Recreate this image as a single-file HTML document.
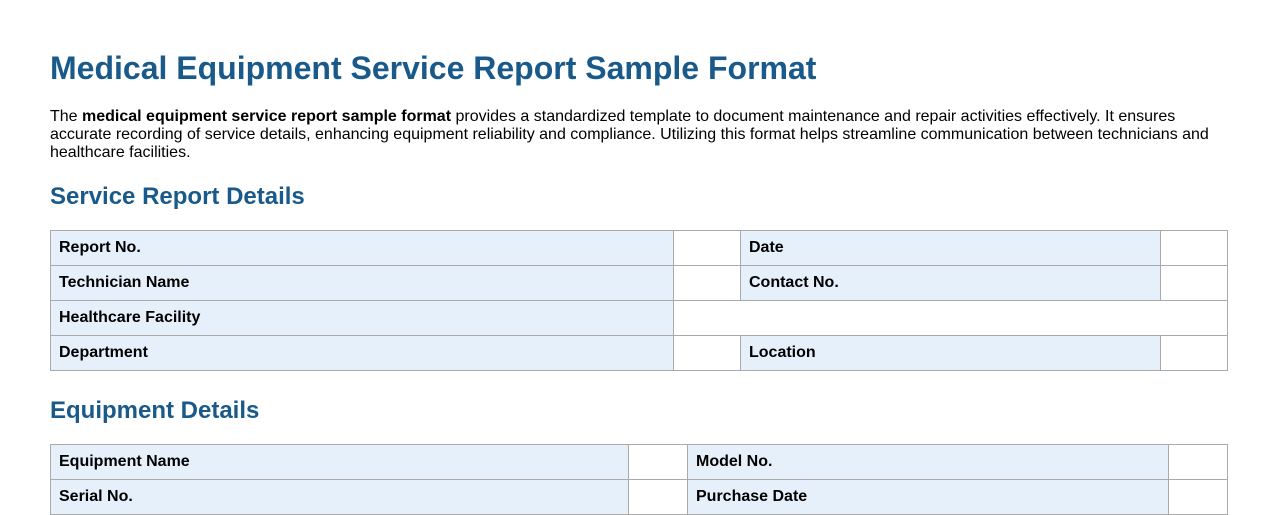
<!DOCTYPE html>
<html><head><meta charset="utf-8"><style>
html,body{margin:0;padding:0;background:#fff;width:1278px;height:501px;overflow:hidden}
body{font-family:"Liberation Sans",Arial,sans-serif;color:#000}
h1{position:absolute;left:50px;top:48px;margin:0;font-size:32px;line-height:40px;color:#1a5a8a;font-weight:bold;white-space:nowrap}
p{position:absolute;left:50px;top:108px;width:1180px;margin:0;font-size:16px;line-height:18px}
h2{position:absolute;left:50px;margin:0;font-size:24px;line-height:30px;color:#1a5a8a;font-weight:bold}
table{position:absolute;left:50px;width:1177px;border-collapse:collapse;table-layout:fixed}
td{border:1px solid #aaa;height:35px;padding:0 8px;font-size:16px;font-weight:bold;box-sizing:border-box}
td.l{background:#e6f0fa}
</style></head><body>
<h1>Medical Equipment Service Report Sample Format</h1>
<p>The <b>medical equipment service report sample format</b> provides a standardized template to document maintenance and repair activities effectively. It ensures accurate recording of service details, enhancing equipment reliability and compliance. Utilizing this format helps streamline communication between technicians and healthcare facilities.</p>
<h2 style="top:182px">Service Report Details</h2>
<table style="top:230px">
<colgroup><col style="width:623px"><col style="width:67px"><col style="width:420px"><col style="width:67px"></colgroup>
<tr><td class="l">Report No.</td><td></td><td class="l">Date</td><td></td></tr>
<tr><td class="l">Technician Name</td><td></td><td class="l">Contact No.</td><td></td></tr>
<tr><td class="l">Healthcare Facility</td><td colspan="3"></td></tr>
<tr><td class="l">Department</td><td></td><td class="l">Location</td><td></td></tr>
</table>
<h2 style="top:396px">Equipment Details</h2>
<table style="top:444px">
<colgroup><col style="width:578px"><col style="width:59px"><col style="width:481px"><col style="width:59px"></colgroup>
<tr><td class="l">Equipment Name</td><td></td><td class="l">Model No.</td><td></td></tr>
<tr><td class="l">Serial No.</td><td></td><td class="l">Purchase Date</td><td></td></tr>
</table>
</body></html>
